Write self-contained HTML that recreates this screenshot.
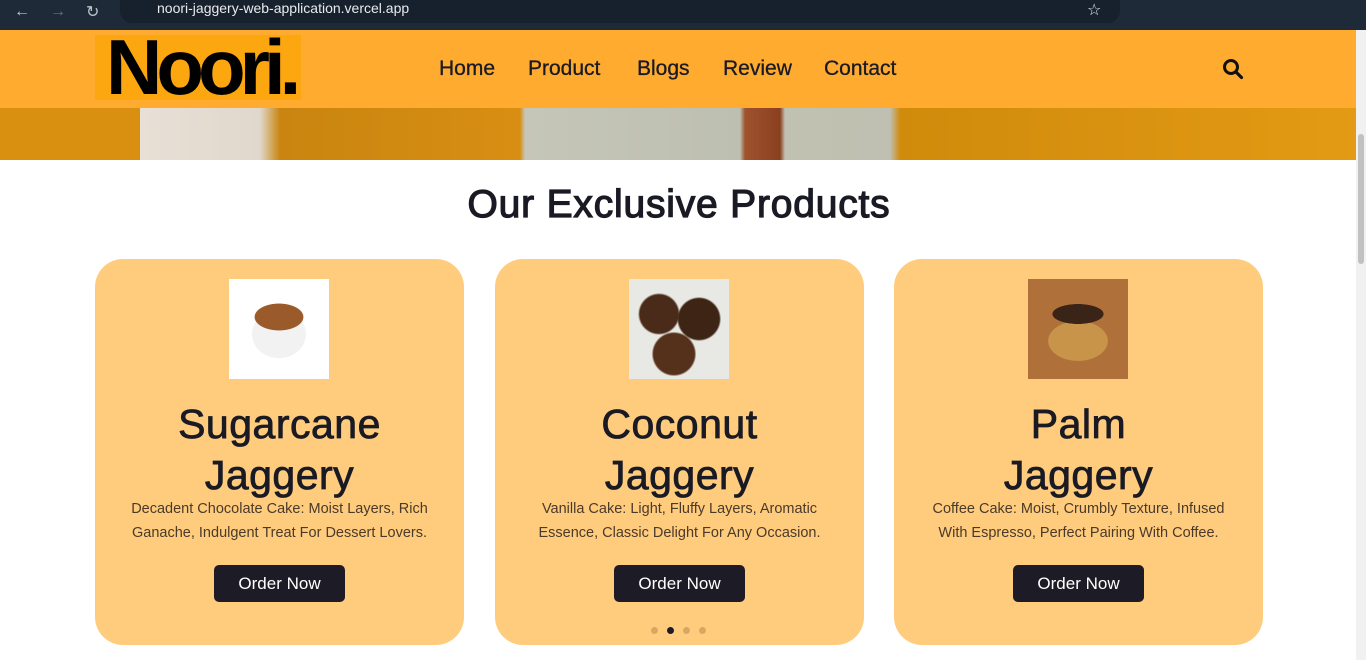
<!DOCTYPE html>
<html><head><meta charset="utf-8"><style>
*{margin:0;padding:0;box-sizing:border-box}
body{width:1366px;height:660px;overflow:hidden;background:#fff;font-family:"Liberation Sans","DejaVu Sans",sans-serif;position:relative}
.chrome{position:absolute;left:0;top:0;width:1366px;height:30px;background:#1f2a38}
.url{position:absolute;left:120px;top:0;width:1000px;height:23px;background:#17212e;border-radius:0 0 12px 12px}
.url span{position:absolute;left:37px;top:0px;color:#e8eaed;font-size:14px}
.hdr{position:absolute;left:0;top:30px;width:1356px;height:78px;background:#ffab30}
.logo{position:absolute;left:95px;top:35px;width:206px;height:65px;background:#fca710;overflow:hidden}
.logo span{position:absolute;left:11px;top:-7px;font-weight:bold;font-size:78px;letter-spacing:-6px;color:#000;line-height:78px}
.nav{position:absolute;top:57px;font-size:21px;color:#1a1a24;-webkit-text-stroke:.3px #1a1a24}
.hero{position:absolute;left:0;top:108px;width:1356px;height:52px;background:linear-gradient(90deg,#d98f10 0,#d98f10 140px,#e8e0d6 140px,#e0d8cc 260px,#c98510 280px,#d88e12 520px,#c5c6b8 525px,#bdbfb0 740px,#a0522d 745px,#8a4020 780px,#c0c1b0 785px,#c0c0b2 890px,#d08b0c 900px,#e39a14 1356px)}
.sb{position:absolute;left:1356px;top:30px;width:10px;height:630px;background:#f1f1f1}
.sb i{position:absolute;left:2px;top:104px;width:6px;height:130px;background:#c1c1c1;border-radius:3px}
h1{position:absolute;left:0;width:1358px;top:183px;text-align:center;font-size:39px;font-weight:normal;-webkit-text-stroke:1.2px #1a1a24;color:#1a1a24;letter-spacing:.8px}
.card{position:absolute;top:259px;width:369px;height:386px;background:#ffcc7d;border-radius:28px;text-align:center}
.card .img{position:absolute;left:134px;top:20px;width:100px;height:100px}
.card h2{position:absolute;top:140px;width:100%;font-size:41px;font-weight:normal;-webkit-text-stroke:.8px #1a1a24;line-height:51px;color:#1a1a24;letter-spacing:.5px}
.card p{position:absolute;top:238px;left:26px;right:26px;font-size:14.5px;line-height:24px;color:#4a3a2a}
.card .btn{position:absolute;left:119px;top:306px;width:131px;height:37px;background:#1d1b26;color:#fff;border-radius:5px;font-size:17px;line-height:37px}
.dots{position:absolute;top:627px;left:651px;font-size:0;line-height:0}
.dots i{display:inline-block;width:7px;height:7px;border-radius:50%;background:#d9a860;margin-right:9px}
</style></head><body>
<div class="chrome"><span style="position:absolute;left:14px;top:3px;color:#c0c4ca;font-size:16px">←</span><span style="position:absolute;left:50px;top:3px;color:#6a7380;font-size:16px">→</span><span style="position:absolute;left:86px;top:2px;color:#c0c4ca;font-size:16px">↻</span><div class="url"><span>noori-jaggery-web-application.vercel.app</span><span style="left:967px;font-size:16px">☆</span></div></div>
<div class="hdr"></div>
<div class="hero"></div>
<div class="logo"><span>Noori.</span></div>
<div class="nav" style="left:439px">Home</div>
<div class="nav" style="left:528px">Product</div>
<div class="nav" style="left:637px">Blogs</div>
<div class="nav" style="left:723px">Review</div>
<div class="nav" style="left:824px">Contact</div>
<svg style="position:absolute;left:1222px;top:58px" width="22" height="22" viewBox="0 0 22 22"><circle cx="9" cy="9" r="6.5" fill="none" stroke="#111" stroke-width="3"/><line x1="14" y1="14" x2="19.5" y2="19.5" stroke="#111" stroke-width="3.2" stroke-linecap="round"/></svg>
<div class="sb"><i></i></div>
<h1>Our Exclusive Products</h1>
<div class="card" style="left:95px"><div class="img" style="background:radial-gradient(ellipse 40px 22px at 50% 38%,#9a5a2a 60%,transparent 62%),radial-gradient(ellipse 38px 34px at 50% 55%,#f2f2f2 70%,#fff 72%)"></div><h2>Sugarcane<br>Jaggery</h2><p>Decadent Chocolate Cake: Moist Layers, Rich Ganache, Indulgent Treat For Dessert Lovers.</p><div class="btn">Order Now</div></div>
<div class="card" style="left:495px"><div class="img" style="background:radial-gradient(circle at 30% 35%,#4a2a18 20%,transparent 22%),radial-gradient(circle at 70% 40%,#3e2414 22%,transparent 24%),radial-gradient(circle at 45% 75%,#55301a 22%,transparent 24%),#e8e8e4"></div><h2>Coconut<br>Jaggery</h2><p>Vanilla Cake: Light, Fluffy Layers, Aromatic Essence, Classic Delight For Any Occasion.</p><div class="btn">Order Now</div></div>
<div class="card" style="left:894px"><div class="img" style="background:radial-gradient(ellipse 36px 14px at 50% 35%,#3a2418 70%,transparent 72%),radial-gradient(ellipse 42px 28px at 50% 62%,#c8944a 70%,transparent 72%),#b0703a"></div><h2>Palm<br>Jaggery</h2><p>Coffee Cake: Moist, Crumbly Texture, Infused<br>With Espresso, Perfect Pairing With Coffee.</p><div class="btn">Order Now</div></div>
<div class="dots"><i></i><i style="background:#1d1b26"></i><i></i><i></i></div>
</body></html>
